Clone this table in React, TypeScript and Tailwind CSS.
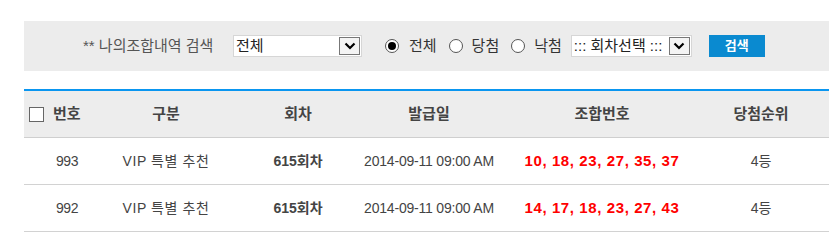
import React from "react";

const font = { fontFamily: '"Liberation Sans", "Noto Sans CJK KR", sans-serif' };

function Chevron() {
  return (
    <svg width="12" height="8" viewBox="0 0 12 8">
      <path d="M1.5 1.5 L6 6 L10.5 1.5" stroke="#000" strokeWidth="2.2" fill="none" />
    </svg>
  );
}

function SelectBox({ label, width }: { label: string; width: string }) {
  return (
    <div className={`flex h-[22px] items-stretch border border-[#d6d6d6] bg-white ${width}`}>
      <div className="flex flex-1 items-center overflow-hidden whitespace-nowrap pl-[2px] text-[15px] text-[#222]">{label}</div>
      <div className="my-[1px] mr-[1px] flex w-[21px] items-center justify-center border border-[#777] bg-[#f4f4f4]">
        <Chevron />
      </div>
    </div>
  );
}

function Radio({ checked }: { checked?: boolean }) {
  return (
    <div className="flex h-[14px] w-[14px] items-center justify-center rounded-full border border-[#555] bg-white">
      {checked && <div className="h-[8px] w-[8px] rounded-full bg-black" />}
    </div>
  );
}

const rows = [
  { no: "993", nums: "10, 18, 23, 27, 35, 37" },
  { no: "992", nums: "14, 17, 18, 23, 27, 43" },
];

const cols = "grid grid-cols-[86px_112px_152px_110px_236px_82px]";

export default function App() {
  return (
    <div className="h-[241px] w-[834px] bg-white pt-[21px]" style={font}>
      <div className="mx-[24px] flex h-[50px] w-[805px] items-center bg-[#ececec] text-[14px] text-[#555]">
        <span className="ml-[59px] w-[151px] whitespace-nowrap text-[15px]">** 나의조합내역 검색</span>
        <SelectBox label="전체" width="w-[129px] ml-[-1px]" />
        <div className="ml-[23px] flex items-center">
          <Radio checked />
          <span className="ml-[10px] text-[15px] text-[#333]">전체</span>
        </div>
        <div className="ml-[12px] flex items-center">
          <Radio />
          <span className="ml-[9px] text-[15px] text-[#333]">당첨</span>
        </div>
        <div className="ml-[12px] flex items-center">
          <Radio />
          <span className="ml-[9px] text-[15px] text-[#333]">낙첨</span>
        </div>
        <div className="ml-[9px]">
          <SelectBox label="::: 회차선택 :::" width="w-[121px]" />
        </div>
        <button className="ml-[17px] flex h-[22px] w-[56px] items-center justify-center bg-[#0a8ad0] text-[13px] font-bold text-white">
          검색
        </button>
      </div>

      <div className="mx-[24px] mt-[18px] w-[805px] border-t-[2px] border-[#0a96f0]">
        <div className={`${cols} h-[47px] items-center border-b border-[#cfcfcf] bg-[#ededed] text-[15px] font-bold text-[#444]`}>
          <div className="flex items-center pl-[5px]">
            <div className="h-[15px] w-[15px] border border-[#666] bg-white" />
            <span className="ml-[9px]">번호</span>
          </div>
          <div className="flex justify-center">구분</div>
          <div className="flex justify-center">회차</div>
          <div className="flex justify-center whitespace-nowrap">발급일</div>
          <div className="flex justify-center">조합번호</div>
          <div className="flex justify-center whitespace-nowrap">당첨순위</div>
        </div>
        {rows.map((r) => (
          <div key={r.no} className={`${cols} h-[47px] items-center border-b border-[#d2d2d2] text-[14px] text-[#444]`}>
            <div className="flex justify-center tracking-[-0.5px]">{r.no}</div>
            <div className="flex justify-center whitespace-nowrap tracking-[0.6px]">VIP 특별 추천</div>
            <div className="flex justify-center whitespace-nowrap font-bold">615회차</div>
            <div className="flex justify-center whitespace-nowrap tracking-[-0.2px]">2014-09-11 09:00 AM</div>
            <div className="flex justify-center whitespace-nowrap text-[15px] font-bold tracking-[0.6px] text-[#ff0000]">{r.nums}</div>
            <div className="flex justify-center">4등</div>
          </div>
        ))}
      </div>
    </div>
  );
}
